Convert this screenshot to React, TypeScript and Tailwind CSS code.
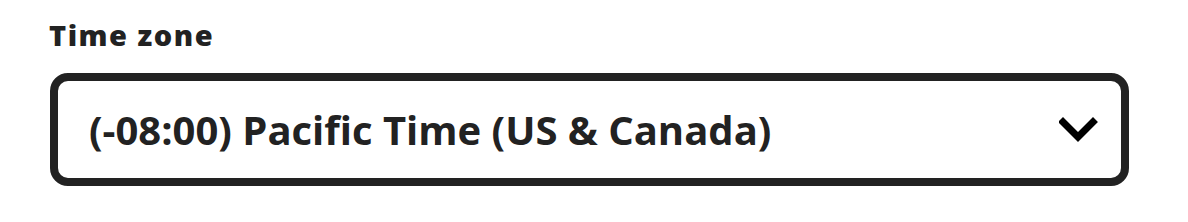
import React from "react";

export default function App() {
  return (
    <div className="w-[1188px] h-[222px] bg-white pl-[49px] pr-[59px] pt-[17px] font-['Open_Sans',sans-serif] text-[#222222]">
      <div className="text-[29px] leading-[35px] font-extrabold tracking-[1.5px]">Time zone</div>
      <div className="mt-[21px] ml-[1px] h-[113px] border-[8px] border-[#222222] rounded-[18px] flex items-center justify-between pl-[31px] pr-[22px]">
        <span className="text-[40px] leading-[46px] font-bold">(-08:00) Pacific Time (US &amp; Canada)</span>
        <svg width="40" height="28" viewBox="0 0 40 28" className="shrink-0">
          <polyline points="4,6 19,21 34,6" fill="none" stroke="#000" strokeWidth="7" strokeLinecap="square" strokeLinejoin="miter" />
        </svg>
      </div>
    </div>
  );
}
